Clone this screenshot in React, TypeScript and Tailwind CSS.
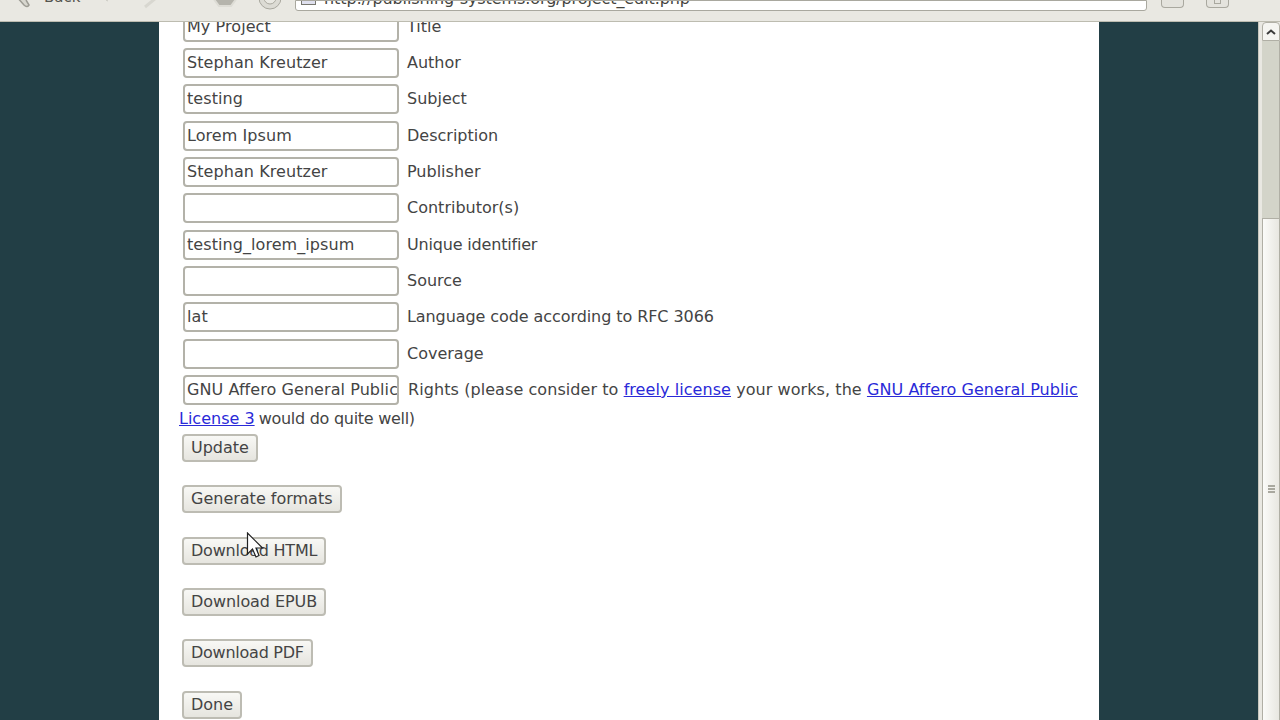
const fields: [string, string, string][] = [
  ["My Project", "Title", ""],
  ["Stephan Kreutzer", "Author", ""],
  ["testing", "Subject", ""],
  ["Lorem Ipsum", "Description", ""],
  ["Stephan Kreutzer", "Publisher", ""],
  ["", "Contributor(s)", ""],
  ["testing_lorem_ipsum", "Unique identifier", "tracking-[-0.18px]"],
  ["", "Source", ""],
  ["lat", "Language code according to RFC 3066", "tracking-[-0.08px]"],
  ["", "Coverage", ""],
];

const buttons: [string, string][] = [
  ["Generate formats", ""],
  ["Download HTML", "tracking-[-0.23px]"],
  ["Download EPUB", "tracking-[-0.08px]"],
  ["Download PDF", "tracking-[-0.25px]"],
  ["Done", ""],
];

function Field({ value }: { value: string }) {
  return (
    <span className="inline-flex items-center w-[216px] h-[30px] shrink-0 bg-white border-2 border-[#b3b2a9] rounded-[4px] pl-[2px] overflow-hidden whitespace-nowrap text-[#444444] tracking-[0.07px] align-middle">
      {value}
    </span>
  );
}

function Btn({ label, className }: { label: string; className?: string }) {
  return (
    <span className={`inline-flex items-center h-[28px] px-[7px] bg-gradient-to-b from-[#f8f8f5] to-[#e6e5df] border-2 border-[#bdbcb3] rounded-[4px] text-[#444444] whitespace-nowrap ${className ?? ""}`}>
      {label}
    </span>
  );
}

function Link({ children }: { children: string }) {
  return <a className="text-[#2a2ad8] underline">{children}</a>;
}

export default function App() {
  return (
    <div className="relative w-[1280px] h-[720px] overflow-hidden flex flex-col text-[16px] bg-[#223e45] font-['DejaVu_Sans',sans-serif]">
      <header className="h-[22px] shrink-0 bg-[#e9e8e2] border-b border-[#bdbcb0] relative overflow-hidden text-[#55554f] flex items-start">
        <svg width="32" height="10" viewBox="0 0 32 10" className="ml-[12px] shrink-0">
          <path d="M4 -4 L12 5 Q15 8 17 5 L14 0" fill="#d8d7cf" stroke="#9d9c94" strokeWidth="1.5" />
        </svg>
        <span className="-mt-[12px] leading-[18px] text-[15px] w-[50px] shrink-0">Back</span>
        <svg width="180" height="12" viewBox="0 0 180 12" className="ml-[7px] shrink-0">
          <path d="M5 0 L7 1" stroke="#c8c7c0" fill="none" />
          <path d="M44 7 L55 -2" stroke="#d8d7d0" strokeWidth="3" fill="none" />
          <path d="M112 -2 L118 6 L130 6 L136 -2 Z" fill="#b5b4ac" stroke="#dddcd5" strokeWidth="2" />
          <circle cx="169" cy="-2" r="11" fill="#dcdbd4" stroke="#a9a89f" />
          <circle cx="169" cy="-2" r="6" fill="#e9e8e2" stroke="#a9a89f" />
        </svg>
        <div className="ml-[14px] w-[852px] h-[11px] shrink-0 bg-white border border-[#a9a89f] rounded-b-[3px] flex items-start overflow-hidden pl-[5px]">
          <span className="w-[15px] h-[4px] shrink-0 bg-[#dfe0ee] border border-[#77776f] border-t-0" />
          <span className="ml-[8px] text-[16px] leading-[16px] -mt-[10px] text-[#44443e] tracking-[-0.09px] whitespace-nowrap">http://publishing-systems.org/project_edit.php</span>
        </div>
        <span className="ml-[14px] w-[23px] h-[8px] shrink-0 bg-[#e4e3dd] border border-[#a9a89f] border-t-0 rounded-b-[4px]" />
        <span className="ml-[22px] w-[23px] h-[8px] shrink-0 bg-[#e4e3dd] border border-[#a9a89f] border-t-0 rounded-b-[4px] flex justify-center">
          <span className="w-[7px] h-[4px] border border-[#a9a89f] border-t-0" />
        </span>
      </header>

      <main className="flex-1 flex min-h-0">
        <div className="flex-1 min-w-0 overflow-hidden pl-[159px]">
          <div className="w-[940px] h-[740px] -mt-[10.2px] bg-white text-[#444444] pl-[20px] pr-[20px]">
            <div className="flex flex-col gap-[6.33px] pl-[4px]">
              {fields.map(([value, label, track]) => (
                <div key={label} className="flex items-center h-[30px] gap-[8px]">
                  <Field value={value} />
                  <span className={`whitespace-nowrap ${track}`}>{label}</span>
                </div>
              ))}
            </div>
            <p className="mt-[6.5px] leading-[28px] -mr-[2px]">
              <span className="pl-[4px] inline-block"><Field value="GNU Affero General Public License 3" /></span>{" "}
              <span className="ml-[4px] tracking-[0.07px]">Rights (please consider to <Link>freely license</Link> your works, the <Link>GNU Affero General Public </Link></span><Link>License 3</Link>{" "}
              <span className="-ml-[1px] tracking-[-0.28px]">would do quite well)</span>
            </p>
            <div className="mt-[0.6px] pl-[3px] flex flex-col items-start gap-[23.4px]">
              <Btn label="Update" />
              {buttons.map(([b, track]) => <Btn key={b} label={b} className={track} />)}
            </div>
          </div>
        </div>

        <aside className="w-[22px] shrink-0 bg-[#e9e8e2] flex flex-col border-l border-[#c8c7bd] pl-[3px] relative">
          <div className="h-[19px] shrink-0 bg-[#f5f5f1] border border-[#b0afa5] rounded-t-[4px] flex items-center justify-center">
            <svg width="10" height="6" viewBox="0 0 10 6"><path d="M1 5 L5 1.5 L9 5" stroke="#3c3c3c" strokeWidth="2" fill="none" /></svg>
          </div>
          <div className="h-[177px] shrink-0 bg-[#d3d4c9] border-r border-[#b0afa5]" />
          <div className="flex-1 bg-gradient-to-r from-[#fbfbf9] to-[#e8e7e1] border border-[#b0afa5] border-b-0 flex flex-col items-center pt-[266px] gap-[1px]">
            <span className="w-[7px] h-[2px] bg-[#a9a89f]" />
            <span className="w-[7px] h-[2px] bg-[#a9a89f]" />
            <span className="w-[7px] h-[2px] bg-[#a9a89f]" />
          </div>
        </aside>
      </main>

      <svg width="18" height="26" viewBox="0 0 18 26" className="absolute left-[246px] top-[532px]">
        <path d="M1.5 1 L1.5 22 L6.5 17 L10 25 L13 23.5 L10 16 L16.5 16 Z" fill="#ffffff" stroke="#222222" strokeWidth="1.2" />
      </svg>
    </div>
  );
}
